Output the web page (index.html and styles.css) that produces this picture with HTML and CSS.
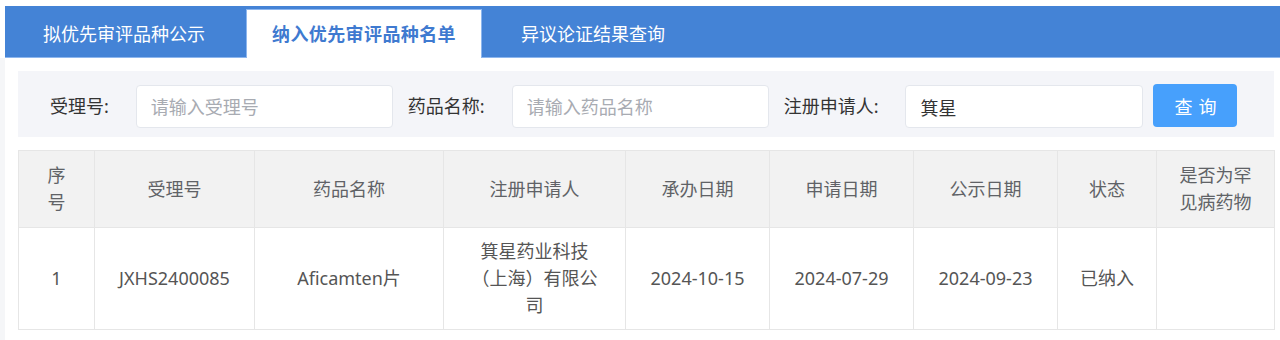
FILE: index.html
```html
<!DOCTYPE html>
<html lang="zh-CN">
<head>
    <meta charset="UTF-8">
    <title>纳入优先审评品种名单</title>
    <link rel="stylesheet" href="styles.css">
</head>
<body>
    <div class="tab-bar">
        <div class="tab">拟优先审评品种公示</div>
        <div class="tab active">纳入优先审评品种名单</div>
        <div class="tab">异议论证结果查询</div>
    </div>

    <div class="content">
        <div class="search-box">
            <label class="search-label">受理号:</label>
            <input class="search-input" type="text" placeholder="请输入受理号">
            <label class="search-label">药品名称:</label>
            <input class="search-input" type="text" placeholder="请输入药品名称">
            <label class="search-label">注册申请人:</label>
            <input class="search-input narrow" type="text" value="箕星">
            <button class="search-btn">查询</button>
        </div>

        <table class="result-table">
            <colgroup>
                <col style="width: 76px">
                <col style="width: 160px">
                <col style="width: 189px">
                <col style="width: 182px">
                <col style="width: 144px">
                <col style="width: 144px">
                <col style="width: 144px">
                <col style="width: 99px">
                <col style="width: 118px">
            </colgroup>
            <thead>
                <tr>
                    <th>序号</th>
                    <th>受理号</th>
                    <th>药品名称</th>
                    <th>注册申请人</th>
                    <th>承办日期</th>
                    <th>申请日期</th>
                    <th>公示日期</th>
                    <th>状态</th>
                    <th>是否为罕见病药物</th>
                </tr>
            </thead>
            <tbody>
                <tr>
                    <td>1</td>
                    <td>JXHS2400085</td>
                    <td>Aficamten片</td>
                    <td>箕星药业科技（上海）有限公司</td>
                    <td>2024-10-15</td>
                    <td>2024-07-29</td>
                    <td>2024-09-23</td>
                    <td>已纳入</td>
                    <td></td>
                </tr>
            </tbody>
        </table>
    </div>
</body>
</html>
```

FILE: styles.css
```css
body {
    margin: 0;
    background-color: #fff;
    font-family: "Noto Sans", "Noto Sans CJK SC", sans-serif;
    color: #333;
}

.tab-bar {
    display: flex;
    align-items: flex-end;
    margin: 6px 0 0 5px;
    height: 52px;
    padding-left: 10px;
    background-color: #4483d6;
    border-bottom: 1px solid #8db6ee;
    box-sizing: border-box;
}

.tab {
    height: 48px;
    line-height: 48px;
    padding: 0 27px;
    margin-right: 11px;
    font-size: 18px;
    color: #fff;
    border: 1px solid transparent;
    border-bottom: none;
    margin-bottom: -1px;
}

.tab:first-child {
    margin-right: 13px;
}

.tab.active {
    padding: 0 25px;
    background-color: #fff;
    color: #3f7ad0;
    font-weight: bold;
    letter-spacing: 0.4px;
    border-color: #8db6ee;
}

.content {
    border-left: 5px solid #f5f6f8;
    padding: 13px 6px 11px 13px;
}

.search-box {
    display: flex;
    align-items: flex-start;
    height: 66px;
    padding: 13px 0 0 32px;
    box-sizing: border-box;
    background-color: #f4f5f9;
}

.search-label {
    font-size: 18px;
    line-height: 45px;
    margin-right: 27px;
    color: #333;
}

.search-input {
    width: 257px;
    height: 43px;
    margin-top: 1px;
    margin-right: 15px;
    padding: 0 14px;
    box-sizing: border-box;
    border: 1px solid #e4e7ed;
    border-radius: 4px;
    background-color: #fff;
    font-family: inherit;
    font-size: 18px;
    color: #333;
    outline: none;
}

.search-input::placeholder {
    color: #a8abb2;
}

.search-input.narrow {
    width: 238px;
    margin-right: 10px;
}

.search-btn {
    width: 84px;
    height: 43px;
    border: none;
    border-radius: 4px;
    background-color: #47a0fc;
    color: #fff;
    font-family: inherit;
    font-size: 18px;
    letter-spacing: 6px;
    text-indent: 6px;
    cursor: pointer;
}

.result-table {
    width: 1256px;
    margin-top: 13px;
    border-collapse: collapse;
    table-layout: fixed;
    font-size: 18px;
    line-height: 27px;
}

.result-table th,
.result-table td {
    border: 1px solid #e6e6e6;
    padding: 11px 22px;
    text-align: center;
    color: #606266;
    font-weight: normal;
}

.result-table th {
    background-color: #f2f2f2;
}

.result-table td {
    padding: 10px 22px;
    color: #555;
}
```
